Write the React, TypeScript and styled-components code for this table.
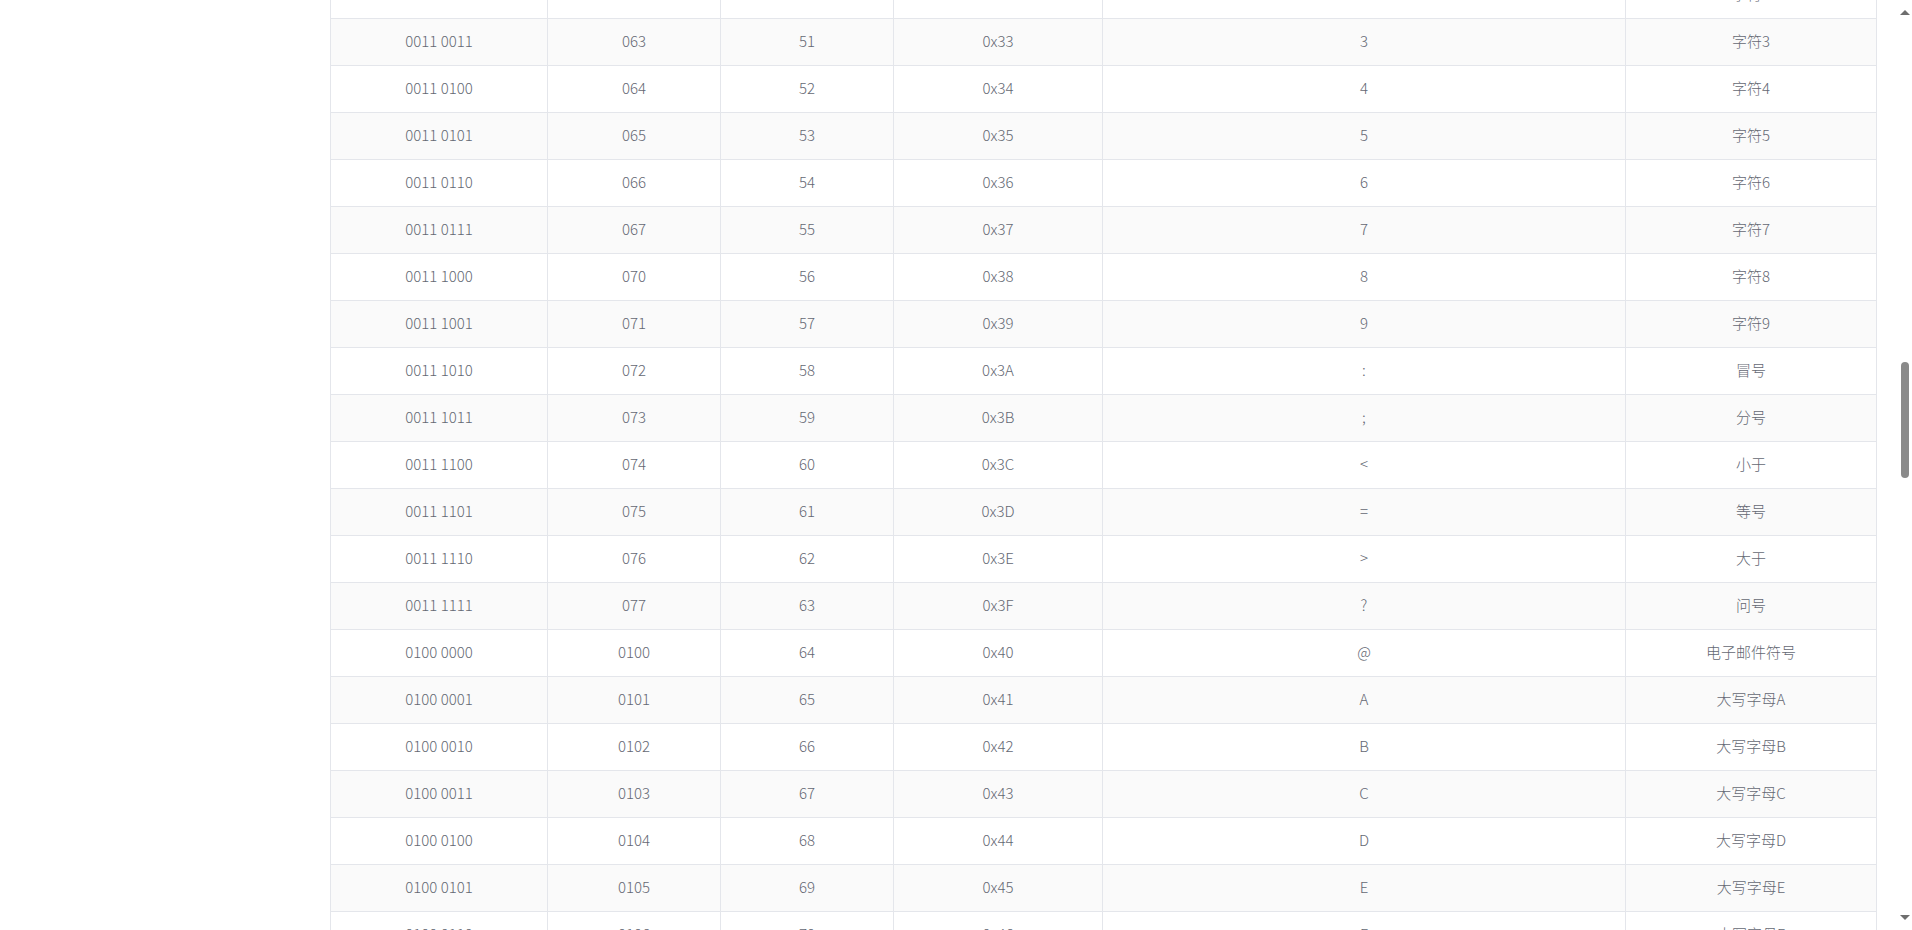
import React from 'react';
import styled, { createGlobalStyle } from 'styled-components';

interface AsciiRow {
	code: number;
	char: string;
	label: string;
}

const labels: Record<number, string> = {
	58: '冒号',
	59: '分号',
	60: '小于',
	61: '等号',
	62: '大于',
	63: '问号',
	64: '电子邮件符号',
};

const rows: AsciiRow[] = Array.from({ length: 21 }, (_, i) => {
	const code = 50 + i;
	const char = String.fromCharCode(code);
	let label = labels[code];
	if (!label) label = code < 58 ? `字符${char}` : `大写字母${char}`;
	return { code, char, label };
});

const toBinary = (n: number) => {
	const b = n.toString(2).padStart(8, '0');
	return `${b.slice(0, 4)} ${b.slice(4)}`;
};
const toOctal = (n: number) => '0' + n.toString(8);
const toHex = (n: number) => '0x' + n.toString(16).toUpperCase();

const columns = [217, 173, 173, 209, 523, 251];

export default function App() {
	return (
		<>
			<GlobalStyle />
			<Page>
				<Sidebar />
				<Main>
					<Table>
						<colgroup>
							{columns.map((w, i) => <col key={i} style={{ width: w }} />)}
						</colgroup>
						<tbody>
							{rows.map(r => (
								<Row key={r.code} $striped={r.code % 2 === 1}>
									<Cell>{toBinary(r.code)}</Cell>
									<Cell>{toOctal(r.code)}</Cell>
									<Cell>{r.code}</Cell>
									<Cell>{toHex(r.code)}</Cell>
									<Cell>{r.char}</Cell>
									<Cell>{r.label}</Cell>
								</Row>
							))}
						</tbody>
					</Table>
				</Main>
				<ScrollTrack>
					<ScrollArrow $down={false} />
					<ThumbLane>
						<Thumb />
					</ThumbLane>
					<ScrollArrow $down />
				</ScrollTrack>
			</Page>
		</>
	);
}

const GlobalStyle = createGlobalStyle`
	html, body {
		margin: 0;
		padding: 0;
		height: 100%;
		overflow: hidden;
		background: #fff;
	}
	body {
		font-family: "Noto Sans CJK SC", "Noto Sans", sans-serif;
	}
`;

const Page = styled.div`
	display: flex;
	width: 1912px;
	height: 930px;
	overflow: hidden;
`;

const Sidebar = styled.aside`
	flex: 0 0 330px;
`;

const Main = styled.main`
	flex: 1;
	overflow: hidden;
`;

const Table = styled.table`
	margin-top: -28px;
	width: 1546px;
	table-layout: fixed;
	border-collapse: separate;
	border-spacing: 0;
	border-left: 1px solid #e4e6eb;
	font-size: 15px;
	color: #646873;
`;

const Row = styled.tr<{ $striped: boolean }>`
	background: ${p => p.$striped ? '#fafafa' : '#fff'};
`;

const Cell = styled.td`
	box-sizing: border-box;
	height: 47px;
	padding: 0 10px 4px;
	text-align: center;
	vertical-align: middle;
	border-right: 1px solid #e4e6eb;
	border-bottom: 1px solid #e4e6eb;
	white-space: nowrap;
	font-weight: 300;
`;

const ScrollTrack = styled.div`
	flex: 0 0 15px;
	display: flex;
	flex-direction: column;
	background: #fff;
`;

const ScrollArrow = styled.div<{ $down: boolean }>`
	flex: 0 0 ${p => p.$down ? '26px' : '24px'};
	display: flex;
	align-items: center;
	justify-content: center;

	&::after {
		content: '';
		width: 0;
		height: 0;
		border-left: 5px solid transparent;
		border-right: 5px solid transparent;
		${p => p.$down ? 'border-top: 5px solid #6e6e6e;' : 'border-bottom: 5px solid #6e6e6e;'}
	}
`;

const ThumbLane = styled.div`
	flex: 1;
	padding-top: 338px;
	display: flex;
	justify-content: center;
`;

const Thumb = styled.div`
	width: 8px;
	height: 116px;
	border-radius: 4px;
	background: #8a8a8a;
`;
